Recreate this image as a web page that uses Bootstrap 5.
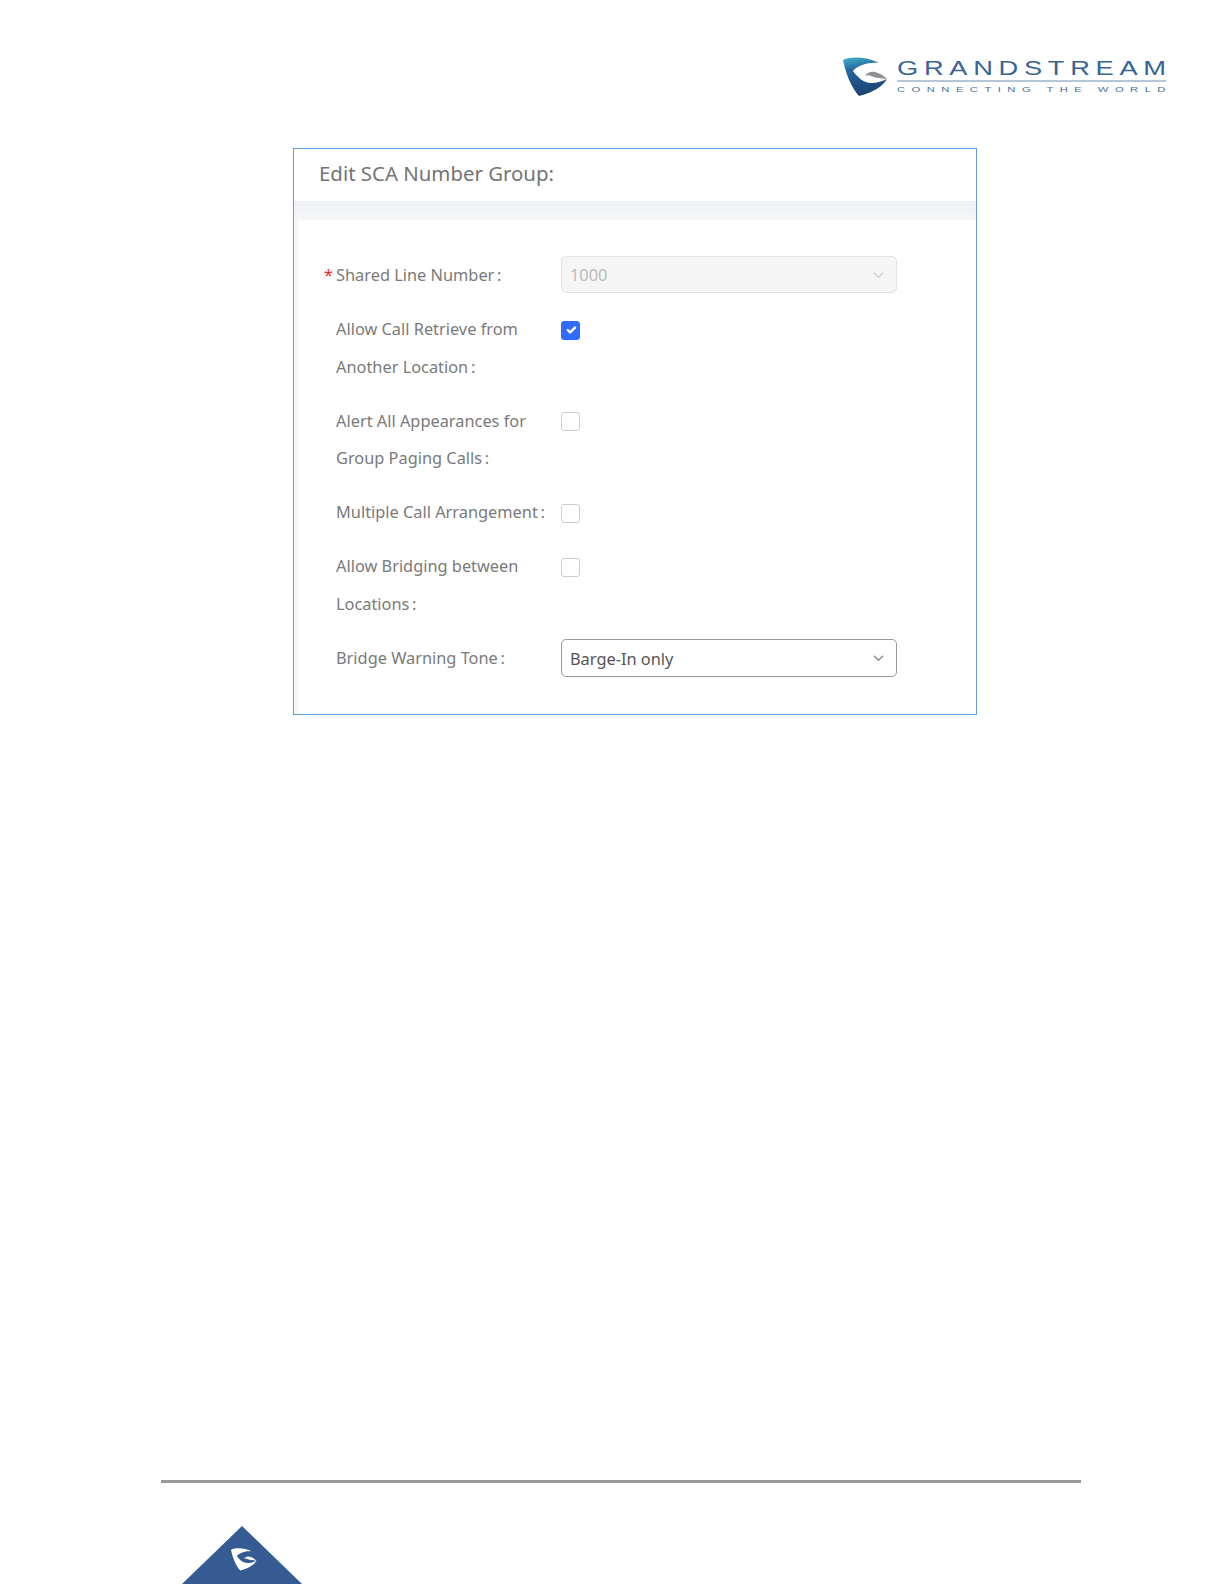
<!doctype html>
<html lang="en">
<head>
<meta charset="utf-8">
<title>Edit SCA Number Group</title>
<link href="https://cdn.jsdelivr.net/npm/bootstrap@5.3.0/dist/css/bootstrap.min.css" rel="stylesheet">
<style>
html,body{height:1584px;overflow:hidden;background:#fff;}
body{font-family:"Noto Sans","Open Sans",sans-serif;}
.doc-page{height:1584px;}
.doc-head{height:148px;padding:57px 58px 0 0;}
.sca-frame{width:684px;height:567px;margin-left:293px;border:1px solid #5a9fe0;}
.sca-title{height:52px;padding-left:25px;font-size:20.4px;line-height:48px;color:#747474;}
.sca-band{height:19px;background:linear-gradient(#eef1f4,#f5f7f9);}
.sca-body{padding:37px 0 0 5px;background:linear-gradient(90deg,#f5f8fb 5px,#fff 5px);height:494px;}
.sca-form{padding-left:25px;gap:16.6px;}
.sca-row{display:flex;align-items:flex-start;}
.sca-label{width:237px;padding-left:12px;font-size:16.35px;line-height:37.5px;color:#7a7a7a;position:relative;}
.sca-star{position:absolute;left:0;top:0;color:#f5222d;font-size:16px;}
.sca-ctl{width:336px;}
.sca-select{height:37px;margin-top:-1px;font-family:"Noto Sans",sans-serif;font-size:16.35px;line-height:24px;padding:5px 30px 5px 8px;border-radius:5px;color:#555;border:1px solid #999;
background-image:url("data:image/svg+xml,%3csvg xmlns='http://www.w3.org/2000/svg' viewBox='0 0 12 8'%3e%3cpath fill='none' stroke='%23888' stroke-width='1.3' d='M1 1.5l5 5 5-5'/%3e%3c/svg%3e");background-size:11px 8px;background-position:right 12px center;}
.sca-select-tall{height:38px;padding-top:6px;padding-bottom:4px;}
.sca-select:disabled{background-color:#f5f5f5;border-color:#e2e2e2;color:#bbb;opacity:1;
background-image:url("data:image/svg+xml,%3csvg xmlns='http://www.w3.org/2000/svg' viewBox='0 0 12 8'%3e%3cpath fill='none' stroke='%23ccc' stroke-width='1.3' d='M1 1.5l5 5 5-5'/%3e%3c/svg%3e");}
.form-check-input.sca-check[type=checkbox]{width:19px;height:19px;margin:9.5px 0 0 0;border:1px solid #c9ccd4;border-radius:3px;background-size:16px;}
.form-check-input.sca-check:checked{background-color:#2f6bff;border-color:#2f6bff;}
.doc-foot{padding-left:161px;margin-top:auto;}
.foot-rule{width:920px;height:3px;background:#999;margin-bottom:43px;}
.foot-tri{display:block;margin-left:21px;}
.logo-word{font-family:"Liberation Sans",sans-serif;}
</style>
</head>
<body class="m-0">
<svg width="0" height="0" class="position-absolute">
<defs>
<linearGradient id="gsfill" x1="0.3" y1="0" x2="0.5" y2="1">
<stop offset="0" stop-color="#3fa6c4"/><stop offset="0.28" stop-color="#2467a0"/><stop offset="1" stop-color="#1d3f70"/>
</linearGradient>
</defs>
</svg>
<div class="doc-page d-flex flex-column">
<header class="doc-head d-flex justify-content-end">
<svg width="325" height="42" viewBox="0 0 325 42" role="img" aria-label="Grandstream logo">
<g transform="translate(2,0)">
<path fill="url(#gsfill)" d="M0 3C9 -1 24 0 36 6C26 5 15 8 10 14C15 21 21 26 28 26C34 26 40 24 44 22C40 29 31 35 16 39C8 30 3 17 0 3Z"/>
<path fill="#8c8f94" d="M22 19C25 14 33 12 44 22C38 21 33 21 28 19C26 18 24 18 22 19Z"/>
</g>
<text class="logo-word" transform="translate(56,18) scale(1.3,1)" textLength="207" lengthAdjust="spacing" font-size="21" fill="#3a6496">GRANDSTREAM</text>
<rect x="56" y="23.5" width="269" height="1" fill="#6f8cb0"/>
<text class="logo-word" transform="translate(56,35) scale(1.5,1)" textLength="179" lengthAdjust="spacing" font-size="7.5" fill="#4a6f96">CONNECTING THE WORLD</text>
</svg>
</header>
<section class="sca-frame">
<div class="sca-title">Edit SCA Number Group:</div>
<div class="sca-band"></div>
<div class="sca-body">
<form class="sca-form d-flex flex-column">
<div class="sca-row">
<div class="sca-label"><span class="sca-star">*</span>Shared Line Number&#8239;:</div>
<div class="sca-ctl"><select class="form-select sca-select" disabled><option>1000</option></select></div>
</div>
<div class="sca-row">
<div class="sca-label">Allow Call Retrieve from Another Location&#8239;:</div>
<div class="sca-ctl"><input class="form-check-input sca-check" type="checkbox" checked></div>
</div>
<div class="sca-row">
<div class="sca-label">Alert All Appearances for Group Paging Calls&#8239;:</div>
<div class="sca-ctl"><input class="form-check-input sca-check" type="checkbox"></div>
</div>
<div class="sca-row">
<div class="sca-label text-nowrap">Multiple Call Arrangement&#8239;:</div>
<div class="sca-ctl"><input class="form-check-input sca-check" type="checkbox"></div>
</div>
<div class="sca-row">
<div class="sca-label">Allow Bridging between Locations&#8239;:</div>
<div class="sca-ctl"><input class="form-check-input sca-check" type="checkbox"></div>
</div>
<div class="sca-row">
<div class="sca-label">Bridge Warning Tone&#8239;:</div>
<div class="sca-ctl"><select class="form-select sca-select sca-select-tall"><option>Barge-In only</option></select></div>
</div>
</form>
</div>
</section>
<footer class="doc-foot">
<div class="foot-rule"></div>
<svg class="foot-tri" width="120" height="58" viewBox="0 0 120 58" role="img" aria-label="Grandstream mark">
<polygon fill="#355b92" points="60,0 120,58 0,58"/>
<g transform="translate(49,22) scale(0.58)">
<path fill="#fff" d="M0 3C9 -1 24 0 36 6C26 5 15 8 10 14C15 21 21 26 28 26C34 26 40 24 44 22C40 29 31 35 16 39C8 30 3 17 0 3Z"/>
<path fill="#fff" d="M22 19C25 14 33 12 44 22C38 21 33 21 28 19C26 18 24 18 22 19Z"/>
</g>
</svg>
</footer>
</div>
</body>
</html>
